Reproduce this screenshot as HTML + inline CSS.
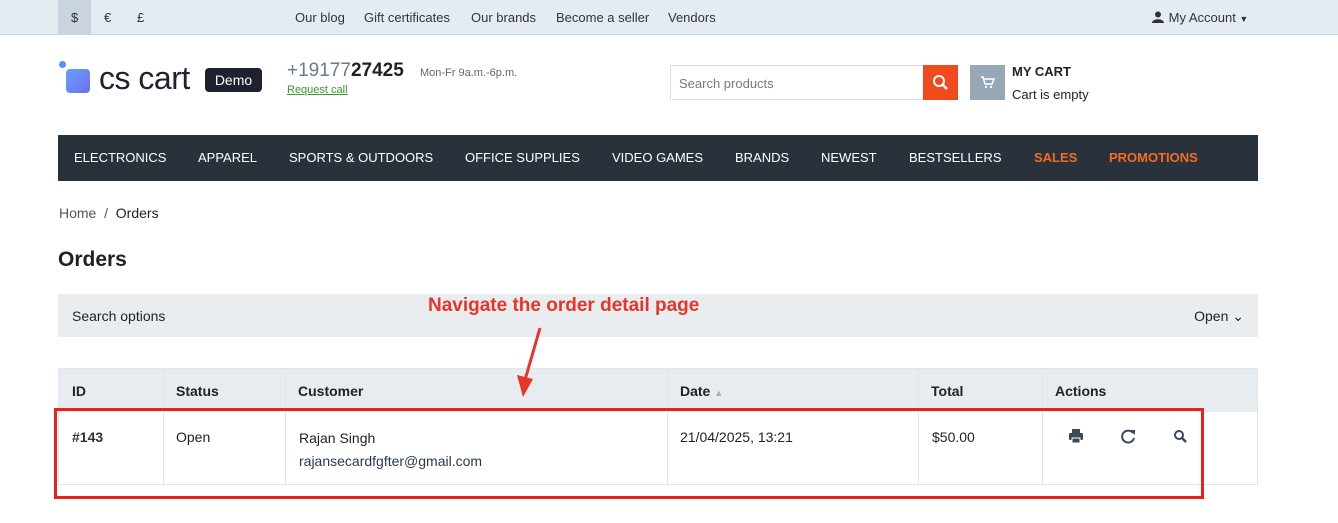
<!DOCTYPE html><html><head><meta charset="utf-8"><style>
*{margin:0;padding:0;box-sizing:border-box}
body{width:1338px;height:523px;overflow:hidden;background:#fff;font-family:"Liberation Sans",sans-serif;color:#222;position:relative}
.a{position:absolute}
.top{left:0;top:0;width:1338px;height:35px;background:#e4ecf2;border-bottom:1px solid #c8d4de;font-size:13px;color:#333}
.nav{left:58px;top:135px;width:1200px;height:46px;background:#29323b;color:#fff;font-size:13px}
.nav span{position:absolute;top:15px}
</style></head><body>
<div class="a top">
 <div class="a" style="left:58px;top:0;width:33px;height:35px;background:#c9d4de"></div>
 <span class="a" style="left:71px;top:10px">$</span><span class="a" style="left:104px;top:10px">€</span><span class="a" style="left:137px;top:10px">£</span>
 <span class="a" style="left:295px;top:10px">Our blog</span><span class="a" style="left:364px;top:10px">Gift certificates</span><span class="a" style="left:471px;top:10px">Our brands</span><span class="a" style="left:556px;top:10px">Become a seller</span><span class="a" style="left:668px;top:10px">Vendors</span>
 <span class="a" style="left:1152px;top:10px"><svg width="13" height="12" style="vertical-align:-1px"><circle cx="6" cy="3.5" r="3" fill="#333"/><path d="M0 12c0-5 12-5 12 0z" fill="#333"/></svg> My Account <span style="font-size:9px">▼</span></span>
</div>
<div class="a" style="left:59px;top:61px;width:7px;height:7px;border-radius:50%;background:#5b8ef5"></div>
<div class="a" style="left:66px;top:69px;width:24px;height:24px;border-radius:4px;background:linear-gradient(135deg,#6aa0f8,#6b6ff0)"></div>
<span class="a" style="left:99px;top:60px;font-size:32px;color:#1e2230;letter-spacing:-0.5px">cs cart</span>
<div class="a" style="left:205px;top:68px;width:57px;height:24px;background:#1e2230;border-radius:4px;color:#fff;font-size:14px;text-align:center;line-height:24px">Demo</div>
<span class="a" style="left:287px;top:60px;font-size:19px;color:#6a7a8e">+19177<b style="color:#222">27425</b></span>
<span class="a" style="left:420px;top:67px;font-size:11px;color:#666">Mon-Fr 9a.m.-6p.m.</span>
<span class="a" style="left:287px;top:84px;font-size:11px;color:#3a9a2a;text-decoration:underline">Request call</span>
<div class="a" style="left:670px;top:65px;width:254px;height:35px;border:1px solid #ddd;font-size:13px;color:#778;padding:10px 8px">Search products</div>
<div class="a" style="left:923px;top:65px;width:35px;height:35px;background:#f14a1e"><svg width="35" height="35"><circle cx="16" cy="16" r="5" stroke="#fff" stroke-width="2" fill="none"/><path d="M20 20l4 4" stroke="#fff" stroke-width="2.5"/></svg></div>
<div class="a" style="left:970px;top:65px;width:35px;height:35px;background:#96a8b6"><svg width="35" height="35"><path d="M11 12h2l2 7h7l2-5h-10" stroke="#fff" stroke-width="1.5" fill="none"/><circle cx="16" cy="22" r="1.2" fill="#fff"/><circle cx="21" cy="22" r="1.2" fill="#fff"/></svg></div>
<span class="a" style="left:1012px;top:64px;font-size:13px;font-weight:bold">MY CART</span>
<span class="a" style="left:1012px;top:87px;font-size:13px">Cart is empty</span>
<div class="a nav"><span style="left:16px">ELECTRONICS</span><span style="left:140px">APPAREL</span><span style="left:231px">SPORTS &amp; OUTDOORS</span><span style="left:407px">OFFICE SUPPLIES</span><span style="left:554px">VIDEO GAMES</span><span style="left:677px">BRANDS</span><span style="left:763px">NEWEST</span><span style="left:851px">BESTSELLERS</span><span style="left:976px;color:#f36b25;font-weight:bold">SALES</span><span style="left:1051px;color:#f36b25;font-weight:bold">PROMOTIONS</span></div>
<span class="a" style="left:59px;top:205px;font-size:14px;color:#555">Home &nbsp;/&nbsp; <span style="color:#222">Orders</span></span>
<span class="a" style="left:58px;top:248px;font-size:21px;font-weight:bold">Orders</span>
<div class="a" style="left:58px;top:294px;width:1200px;height:43px;background:#e9edf0;font-size:14px;padding:14px 14px">Search options<span style="float:right">Open ⌄</span></div>
<span class="a" style="left:428px;top:295px;font-size:19px;font-weight:bold;color:#e8352a">Navigate the order detail page</span>
<div class="a" style="left:58px;top:368px;width:1200px;height:117px;border:1px solid #e2e6ea">
 <div class="a" style="left:0;top:0;width:1198px;height:43px;background:#e7ecf0"></div>
 <div class="a" style="left:104px;top:0;width:1px;height:116px;background:#e2e6ea"></div>
 <div class="a" style="left:226px;top:0;width:1px;height:116px;background:#e2e6ea"></div>
 <div class="a" style="left:608px;top:0;width:1px;height:116px;background:#e2e6ea"></div>
 <div class="a" style="left:859px;top:0;width:1px;height:116px;background:#e2e6ea"></div>
 <div class="a" style="left:983px;top:0;width:1px;height:116px;background:#e2e6ea"></div>
 <b class="a" style="left:13px;top:14px;font-size:14px">ID</b><b class="a" style="left:117px;top:14px;font-size:14px">Status</b><b class="a" style="left:239px;top:14px;font-size:14px">Customer</b><b class="a" style="left:621px;top:14px;font-size:14px">Date <span style="font-size:9px;color:#aaa">▲</span></b><b class="a" style="left:872px;top:14px;font-size:14px">Total</b><b class="a" style="left:996px;top:14px;font-size:14px">Actions</b>
 <b class="a" style="left:13px;top:60px;font-size:14px;color:#333">#143</b>
 <span class="a" style="left:117px;top:60px;font-size:14px">Open</span>
 <span class="a" style="left:240px;top:61px;font-size:14px">Rajan Singh</span>
 <span class="a" style="left:240px;top:84px;font-size:14px;color:#2a3a4e">rajansecardfgfter@gmail.com</span>
 <span class="a" style="left:621px;top:60px;font-size:14px">21/04/2025, 13:21</span>
 <span class="a" style="left:873px;top:60px;font-size:14px">$50.00</span>
 <svg class="a" style="left:1008px;top:58px" width="20" height="20"><rect x="5" y="2" width="8" height="4" fill="#3a4a5a"/><rect x="2" y="6" width="14" height="7" rx="1" fill="#3a4a5a"/><rect x="5" y="11" width="8" height="5" fill="#3a4a5a" stroke="#fff" stroke-width="1"/></svg>
 <svg class="a" style="left:1060px;top:58px" width="20" height="20"><path d="M14 6A6 6 0 1 0 15 11" stroke="#3a4a5a" stroke-width="2" fill="none"/><path d="M11 3h5v5z" fill="#3a4a5a"/></svg>
 <svg class="a" style="left:1112px;top:58px" width="20" height="20"><circle cx="8" cy="8" r="4" stroke="#3a4a5a" stroke-width="2" fill="none"/><path d="M11 11l4 4" stroke="#3a4a5a" stroke-width="2.5"/></svg>
</div>
<svg class="a" style="left:510px;top:325px;z-index:5" width="40" height="75"><path d="M30 3L15 55" stroke="#e8352a" stroke-width="3"/><path d="M7 50L13 72L23 54Z" fill="#e8352a"/></svg>
<div class="a" style="left:54px;top:408px;width:1150px;height:91px;border:3px solid #e8231e"></div>
</body></html>
